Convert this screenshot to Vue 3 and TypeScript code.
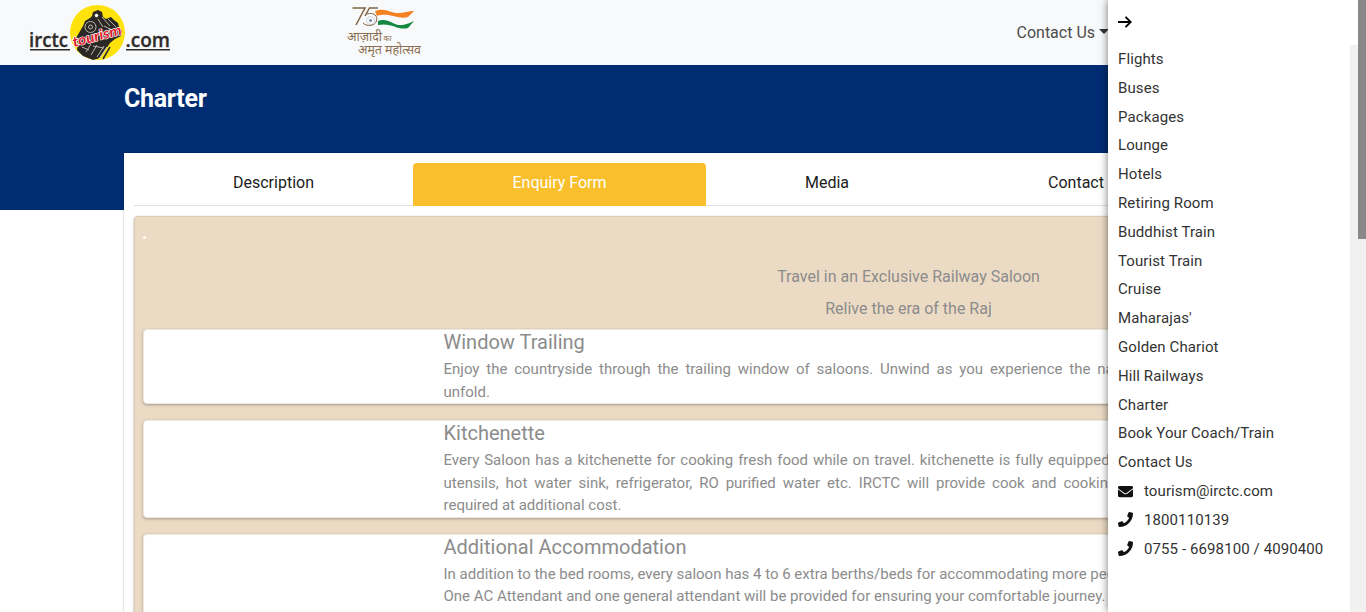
<script setup lang="ts">
interface Line { text: string; gap: string }
interface Feature { title: string; lines: Line[] }

const tabs: string[] = ['Description', 'Enquiry Form', 'Media', 'Contact']

const features: Feature[] = [
  {
    title: 'Window Trailing',
    lines: [
      { text: 'Enjoy the countryside through the trailing window of saloons. Unwind as you experience the na', gap: '3.1px' },
      { text: 'unfold.', gap: '0' },
    ],
  },
  {
    title: 'Kitchenette',
    lines: [
      { text: 'Every Saloon has a kitchenette for cooking fresh food while on travel. kitchenette is fully equipped', gap: '1.2px' },
      { text: 'utensils, hot water sink, refrigerator, RO purified water etc. IRCTC will provide cook and cooking', gap: '3.2px' },
      { text: 'required at additional cost.', gap: '0' },
    ],
  },
  {
    title: 'Additional Accommodation',
    lines: [
      { text: 'In addition to the bed rooms, every saloon has 4 to 6 extra berths/beds for accommodating more peo', gap: '0' },
      { text: 'One AC Attendant and one general attendant will be provided for ensuring your comfortable journey.', gap: '0' },
    ],
  },
]

const menu: string[] = [
  'Flights', 'Buses', 'Packages', 'Lounge', 'Hotels', 'Retiring Room', 'Buddhist Train',
  'Tourist Train', 'Cruise', "Maharajas'", 'Golden Chariot', 'Hill Railways', 'Charter',
  'Book Your Coach/Train', 'Contact Us',
]

const contacts: { icon: 'mail' | 'phone'; text: string }[] = [
  { icon: 'mail', text: 'tourism@irctc.com' },
  { icon: 'phone', text: '1800110139' },
  { icon: 'phone', text: '0755 - 6698100 / 4090400' },
]
</script>

<template>
  <div class="page">
    <header class="topbar">
      <svg class="brand" viewBox="0 0 142 60" width="142" height="60">
        <circle cx="68.500" cy="30.500" r="27.500" fill="#fde30b" />
        <path d="M54 24l2-5 5-3 2-2 1-4 5-2 4 2 1 5 3 2 5-2 3 3 4 3 1 4 3 4-1 5-6 3-5 4-4 6-6 9-7 2-10-4-6-6 1-6-2-6z" fill="#2b2724" />
        <g fill="none" stroke="#b9b6b0" stroke-width="1">
          <circle cx="61.500" cy="25" r="5.500" />
          <circle cx="61.500" cy="25" r="2" />
          <path d="M69 17l5 8M73 15l8 9M79 17l8 8M75 24l8 4M53 45l7 3M57 50l5-8M62 53l6-10M68 55l7-11M64 44l11 2" />
        </g>
        <circle cx="67.500" cy="13.500" r="2.200" fill="#fff" stroke="#2b2724" />
        <path d="M70 57l8-12M75 56l6-11" stroke="#fff" stroke-width=".8" />
        <path d="M74 57l7-12" stroke="#2b2724" stroke-width="1.500" />
        <text class="script" transform="translate(45 45) rotate(-15)" textLength="50" lengthAdjust="spacingAndGlyphs">tourism</text>
        <text class="word" x="0" y="45" textLength="39" lengthAdjust="spacingAndGlyphs">irctc</text>
        <text class="word" x="96.500" y="45" textLength="44.500" lengthAdjust="spacingAndGlyphs">.com</text>
        <path d="M1 47.800H41M97 47.800H141" stroke="#302c2b" stroke-width="1.400" />
      </svg>
      <svg class="festival" viewBox="0 0 76 56" width="76" height="56">
        <g fill="none" stroke="#806344" stroke-width="1.500">
          <path d="M5.500 5H18L9 22" />
          <path d="M31 5H22.500L18 13" />
          <path d="M20 11C27 9 31 13 29.500 18C28 23 20 24 16 20" stroke-width="1" />
        </g>
        <circle cx="23.500" cy="17.500" r="4" fill="none" stroke="#a3abbb" stroke-dasharray="1 1" />
        <circle cx="23.500" cy="17.500" r="1.300" fill="#5a6f92" />
        <path d="M28 8C38 4 43 10 51 10C58 10 61 8 67 8L61 14C51 17 43 9 30 13Z" fill="#f58220" />
        <path d="M31 18C40 14 46 22 53 22C59 22 62 20 67 18L61 25C51 28 45 19 31 22Z" fill="#13883e" />
        <text class="hindi" x="0" y="38" textLength="35" lengthAdjust="spacingAndGlyphs">आज़ादी</text>
        <text class="hindi small" x="36.500" y="37.500" textLength="8" lengthAdjust="spacingAndGlyphs">का</text>
        <text class="hindi" x="11" y="50.500" textLength="63" lengthAdjust="spacingAndGlyphs">अमृत महोत्सव</text>
      </svg>
      <span class="top-link">Contact Us<i class="caret"></i></span>
    </header>

    <section class="banner"><h1>Charter</h1></section>

    <main class="panel">
      <nav class="tabs">
        <a v-for="(tab, i) in tabs" :key="tab" class="tab" :class="['tab-' + i, { active: i === 1 }]">{{ tab }}</a>
      </nav>
      <section class="content">
        <span class="dot">.</span>
        <div class="intro">
          <p>Travel in an Exclusive Railway Saloon</p>
          <p>Relive the era of the Raj</p>
        </div>
        <article v-for="f in features" :key="f.title" class="feature">
          <h2>{{ f.title }}</h2>
          <p v-for="l in f.lines" :key="l.text" :style="{ wordSpacing: l.gap }">{{ l.text }}</p>
        </article>
      </section>
    </main>

    <aside class="drawer">
      <svg class="arrow" viewBox="0 0 14 12" width="14" height="12">
        <path d="M0 6H12.500M7.500 .8L12.700 6L7.500 11.200" fill="none" stroke="#000" stroke-width="1.900" />
      </svg>
      <ul>
        <li v-for="m in menu" :key="m">{{ m }}</li>
        <li v-for="c in contacts" :key="c.text">
          <svg class="icon" viewBox="0 0 512 512" width="15" height="15">
            <path v-if="c.icon === 'mail'" d="M502.300 190.800c3.900-3.100 9.700-.2 9.700 4.700V400c0 26.500-21.500 48-48 48H48c-26.500 0-48-21.500-48-48V195.600c0-5 5.700-7.800 9.700-4.700 22.400 17.400 52.100 39.500 154.100 113.600 21.100 15.400 56.700 47.800 92.200 47.600 35.700.3 72-32.800 92.300-47.600 102-74.100 131.600-96.300 154-113.700zM256 320c23.200.4 56.600-29.200 73.400-41.400 132.700-96.300 142.800-104.700 173.400-128.700 5.800-4.500 9.200-11.500 9.200-18.900v-19c0-26.500-21.500-48-48-48H48c-26.500 0-48 21.500-48 48v19c0 7.400 3.400 14.300 9.200 18.900 30.600 23.900 40.700 32.400 173.400 128.700 16.800 12.200 50.200 41.800 73.400 41.400z" />
            <path v-else d="M493.400 24.600l-104-24c-11.300-2.600-22.900 3.300-27.500 13.900l-48 112c-4.200 9.800-1.400 21.300 6.900 28l60.600 49.600c-36 76.700-98.900 140.500-177.200 177.200l-49.600-60.600c-6.800-8.300-18.200-11.100-28-6.900l-112 48C3.900 366.500-2 378.100.6 389.400l24 104C27.100 504.200 36.700 512 48 512c256.100 0 464-207.500 464-464 0-11.200-7.700-20.900-18.600-23.400z" />
          </svg>
          <span>{{ c.text }}</span>
        </li>
      </ul>
      <div class="inner-track"></div>
    </aside>
    <div class="scrollbar"><div class="thumb"></div></div>
  </div>
</template>

<style scoped>
.page { position: relative; width: 1366px; height: 612px; overflow: hidden; background: #fff; font-family: Roboto, sans-serif; color: #212529; }
.topbar { display: flex; align-items: flex-start; height: 65px; background: #f8f9fa; }
.brand { margin: 2px 0 0 29px; flex: none; }
.word { font: 600 19px "Open Sans", sans-serif; fill: #302c2b; stroke: #302c2b; stroke-width: 0.3px; }
.script { font: italic 700 14px Lato, sans-serif; fill: #e51b2c; stroke: #fff; stroke-width: 1.3px; paint-order: stroke; }
.festival { margin: 3px 0 0 176px; flex: none; }
.hindi { font: 13px "Noto Sans Devanagari", "Noto Sans", sans-serif; fill: #8a6f50; }
.hindi.small { font-size: 8px; }
.top-link { margin: 23px 0 0 593.500px; font-size: 16px; line-height: 19px; color: #4c4c4c; white-space: nowrap; }
.caret { display: inline-block; margin-left: 4px; vertical-align: 4px; border: 5px solid transparent; border-top-color: #333; border-bottom: 0; }
.banner { height: 145px; background: #002c73; }
h1 { margin: 0; padding: 18px 0 0 124px; font-size: 25px; line-height: 31px; font-weight: 700; letter-spacing: -0.3px; color: #fff; }
.panel { box-sizing: border-box; width: 1118px; height: 600px; margin: -57px 0 0 124px; padding: 10px; background: #fff; box-shadow: 0 0 2px rgba(0, 0, 0, 0.3); position: relative; }
.tabs { display: flex; height: 42px; border-bottom: 1px solid #dee2e6; }
.tab { height: 43px; line-height: 39px; font-size: 16px; text-align: center; color: #1a1d20; border-radius: 4px 4px 0 0; }
.tab-0 { width: 279px; }
.tab-1 { width: 293px; }
.tab-2 { width: 242px; }
.tab-3 { width: 256px; }
.tab.active { background: #f9bf2c; color: #fff; }
.content { box-sizing: border-box; margin-top: 10px; height: 500px; padding: 9px 8px; border: 1px solid #dccab4; border-radius: 4px; background: #ebdbc5; box-shadow: 0 1px 3px rgba(0, 0, 0, 0.3); color: #8c8c8c; }
.dot { display: block; height: 35px; line-height: 14px; color: #fff; font-size: 18px; font-weight: 700; margin-left: -1px; }
.intro { width: 650px; margin-left: 440.500px; padding-bottom: 4px; text-align: center; }
.intro p { margin: 0; height: 32px; line-height: 32px; font-size: 16px; }
.feature { box-sizing: border-box; margin-bottom: 16px; padding: 0 0 0 299.500px; border: 1px solid #eee8e0; border-radius: 4px; background: #fff; box-shadow: 0 1px 3px rgba(0, 0, 0, 0.3); overflow: hidden; }
.feature:last-child { padding-bottom: 23px; }
.feature h2 { margin: 0 0 4px; font-size: 20px; line-height: 24px; font-weight: 400; }
.feature p { margin: 0; font-size: 15px; line-height: 22.500px; white-space: nowrap; }
.drawer { position: absolute; top: 0; left: 1108px; width: 250px; height: 612px; background: #fff; box-shadow: 0 0 8px rgba(0, 0, 0, 0.55); }
.arrow { display: block; margin: 16px 0 0 10px; }
.drawer ul { list-style: none; margin: 16.700px 0 0; padding: 0 0 0 10px; }
.drawer li { display: flex; align-items: center; height: 28.800px; font-size: 15px; letter-spacing: 0.1px; color: #333; white-space: nowrap; }
.icon { margin-right: 11px; fill: #111; }
.inner-track { position: absolute; right: 0; top: 45px; bottom: 0; width: 8px; background: #f1f1f1; }
.scrollbar { position: absolute; right: 0; top: 0; width: 8px; height: 612px; background: #f1f1f1; }
.thumb { height: 239px; background: #888; }
</style>
